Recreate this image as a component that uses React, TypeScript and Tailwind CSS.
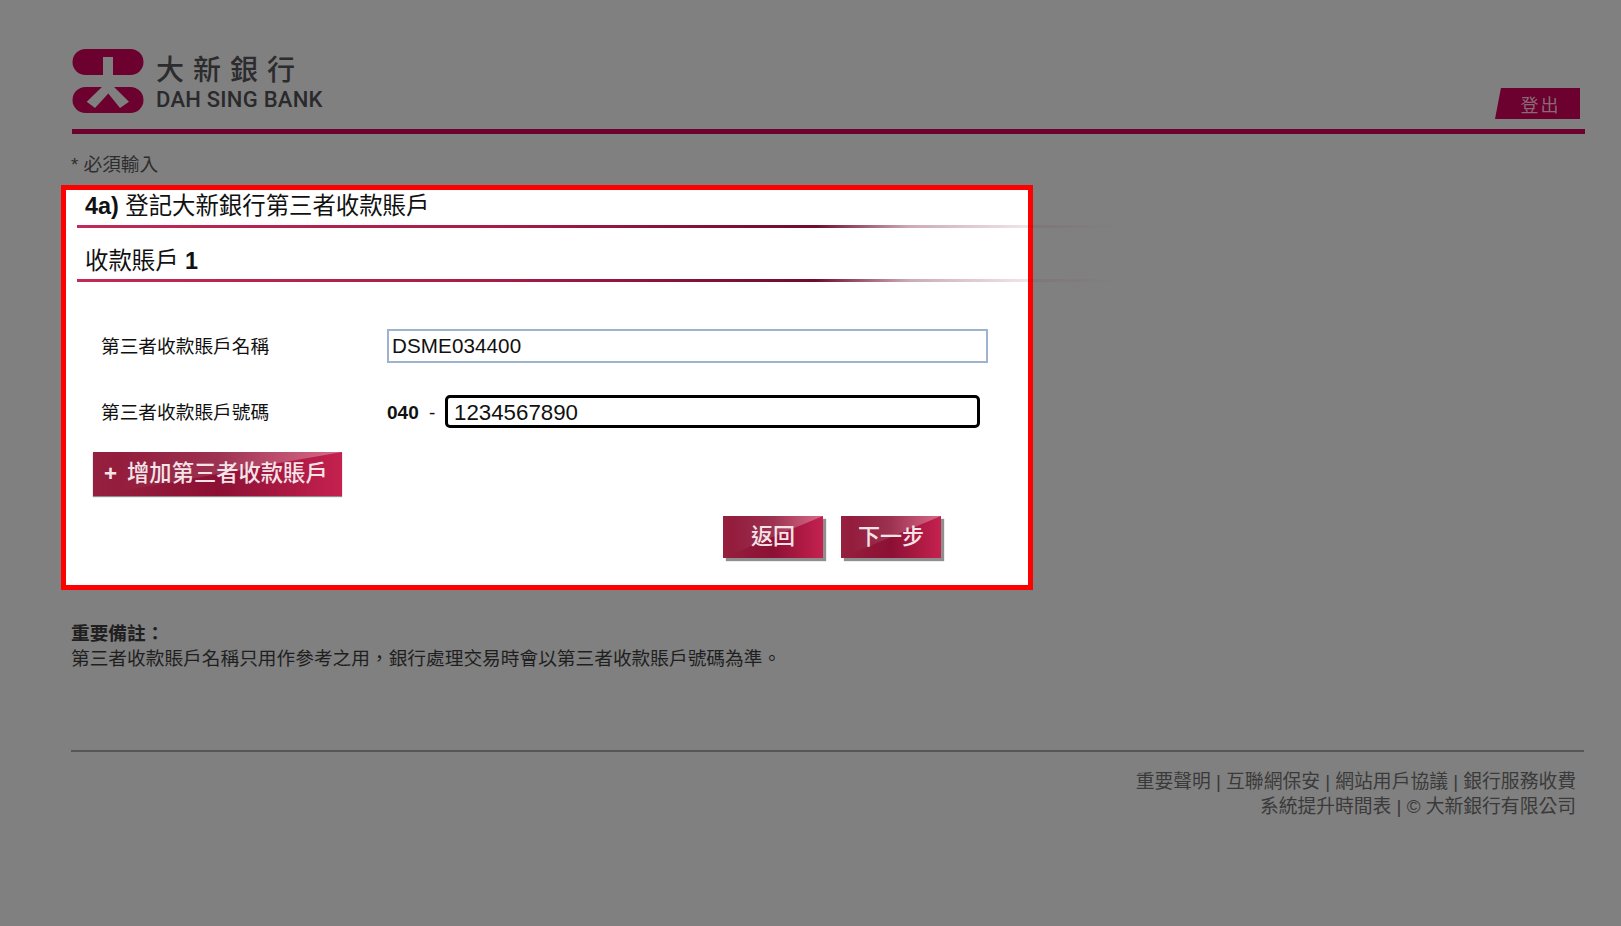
import React from "react";

const cjk = "font-['Liberation_Sans','Noto_Sans_CJK_TC',sans-serif]";
const btnBg = "bg-[linear-gradient(90deg,#96203f_0%,#8c1034_50%,#c5214f_100%)]";

function Rule() {
  return (
    <div className="h-[3px] w-[1040px] bg-[linear-gradient(90deg,#c22a58_0%,#a81c48_40%,#6f0c2c_71%,rgba(111,12,44,0.35)_80%,rgba(111,12,44,0.09)_92%,rgba(111,12,44,0)_100%)]" />
  );
}

function Gloss() {
  return (
    <span className="absolute inset-0 bg-[linear-gradient(90deg,rgba(255,255,255,0)_10%,rgba(255,255,255,0.32)_100%)] [clip-path:polygon(0_0,100%_0,0_100%)]" />
  );
}

function Logo() {
  return (
    <svg width="72" height="65" viewBox="0 0 72 65" className="shrink-0">
      <rect x="0.5" y="0" width="71" height="26" rx="13" fill="#6c002f" />
      <rect x="0.5" y="38" width="71" height="26" rx="13" fill="#6c002f" />
      <path d="M31 8H41V27H31Z" fill="#808080" />
      <path d="M31 37H41L57 52.7L48 59L36.3 44.5L23 59L14.7 52.7Z" fill="#808080" />
    </svg>
  );
}

function SmallButton({ label }: { label: string }) {
  return (
    <button
      className={`relative flex h-[42px] w-[100px] items-center justify-center text-[22px] leading-none font-medium text-[#f4e4e8] shadow-[3px_3px_1px_#8f8f8f] ${btnBg}`}
    >
      <Gloss />
      <span className="relative">{label}</span>
    </button>
  );
}

export default function App() {
  return (
    <div className={`h-[926px] w-[1621px] overflow-hidden bg-[#808080] pt-[49px] ${cjk}`}>
      <header className="ml-[72px] w-[1513px]">
        <div className="flex h-[80px] items-start justify-between">
          <div className="flex gap-[12px]">
            <Logo />
            <div className="flex flex-col">
              <div className="mt-[3px] h-[36px] text-[28px] leading-[38px] font-medium tracking-[9px] text-[#2c2c2e]">大新銀行</div>
              <div className="font-['Roboto',sans-serif] text-[22px] leading-[24px] font-medium tracking-[0.25px] text-[#2a2a2d]">
                DAH SING BANK
              </div>
            </div>
          </div>
          <div className="mt-[39px] mr-[5px] flex h-[31px] w-[85px] items-center justify-center bg-[#6c002f] pt-[5px] pl-[6px] text-[18px] tracking-[2px] text-[#8a6a78] [clip-path:polygon(7%_0,100%_0,100%_100%,0_100%)]">
            登出
          </div>
        </div>
        <div className="h-[5px] bg-[#6c002f]" />
      </header>

      <div className="mt-[18px] ml-[71px] h-[26px] text-[18.7px] leading-[26px] text-[#2e2e2e]">* 必須輸入</div>

      <main className="mt-[7px] ml-[61px] h-[405px] w-[972px] border-[5px] border-[#ff0000] bg-white">
        <section className="pl-[11px]">
          <div className="h-[35px] pl-[8px] text-[23.4px] leading-[33px] text-[#111]">
            <b>4a)</b>&nbsp;登記大新銀行第三者收款賬戶
          </div>
          <Rule />
          <div className="mt-[19px] h-[32px] pl-[8px] text-[23.4px] leading-[29px] text-[#111]">
            收款賬戶 <b>1</b>
          </div>
          <Rule />
        </section>

        <section className="mt-[47px] pl-[35px] text-[18.7px] text-[#111]">
          <div className="flex h-[34px] items-center">
            <div className="w-[286px] pt-[2px] leading-none">第三者收款賬戶名稱</div>
            <div className="flex h-[34px] w-[601px] items-center border-2 border-[#9db3d0] pt-[1px] pl-[3px] text-[20.6px] tracking-[0.1px]">
              DSME034400
            </div>
          </div>
          <div className="mt-[32px] flex h-[33px] items-center">
            <div className="w-[286px] pt-[3px] leading-none">第三者收款賬戶號碼</div>
            <b className="w-[42px] pt-[3px] text-[19px]">040</b>
            <span className="w-[16px] pt-[3px] text-[19px]">-</span>
            <div className="flex h-[33px] w-[535px] items-center rounded-[5px] border-[3px] border-black pt-[3px] pl-[6px] text-[22.3px]">
              1234567890
            </div>
          </div>
          <button
            className={`relative mt-[24px] -ml-[8px] flex h-[44px] w-[249px] items-center gap-[10px] pl-[11px] text-[22.3px] leading-none font-medium text-[#f4e4e8] shadow-[0_1px_1px_#8f8f8f] ${btnBg}`}
          >
            <Gloss />
            <span className="relative font-bold">+</span>
            <span className="relative">增加第三者收款賬戶</span>
          </button>
        </section>

        <div className="mt-[20px] ml-[657px] flex gap-[18px]">
          <SmallButton label="返回" />
          <SmallButton label="下一步" />
        </div>
      </main>

      <section className="mt-[31px] ml-[71px] text-[18.7px] leading-[25px] text-[#1f1f1f]">
        <div className="font-bold">重要備註：</div>
        <div>第三者收款賬戶名稱只用作參考之用，銀行處理交易時會以第三者收款賬戶號碼為準。</div>
      </section>

      <footer className="mt-[79px] ml-[71px] w-[1513px] border-t-2 border-[#565656] pt-[17px] pr-[8px] text-right text-[18.8px] leading-[25px] text-[#3a3a3a]">
        <div>重要聲明 | 互聯網保安 | 網站用戶協議 | 銀行服務收費</div>
        <div>系統提升時間表 | © 大新銀行有限公司</div>
      </footer>
    </div>
  );
}
